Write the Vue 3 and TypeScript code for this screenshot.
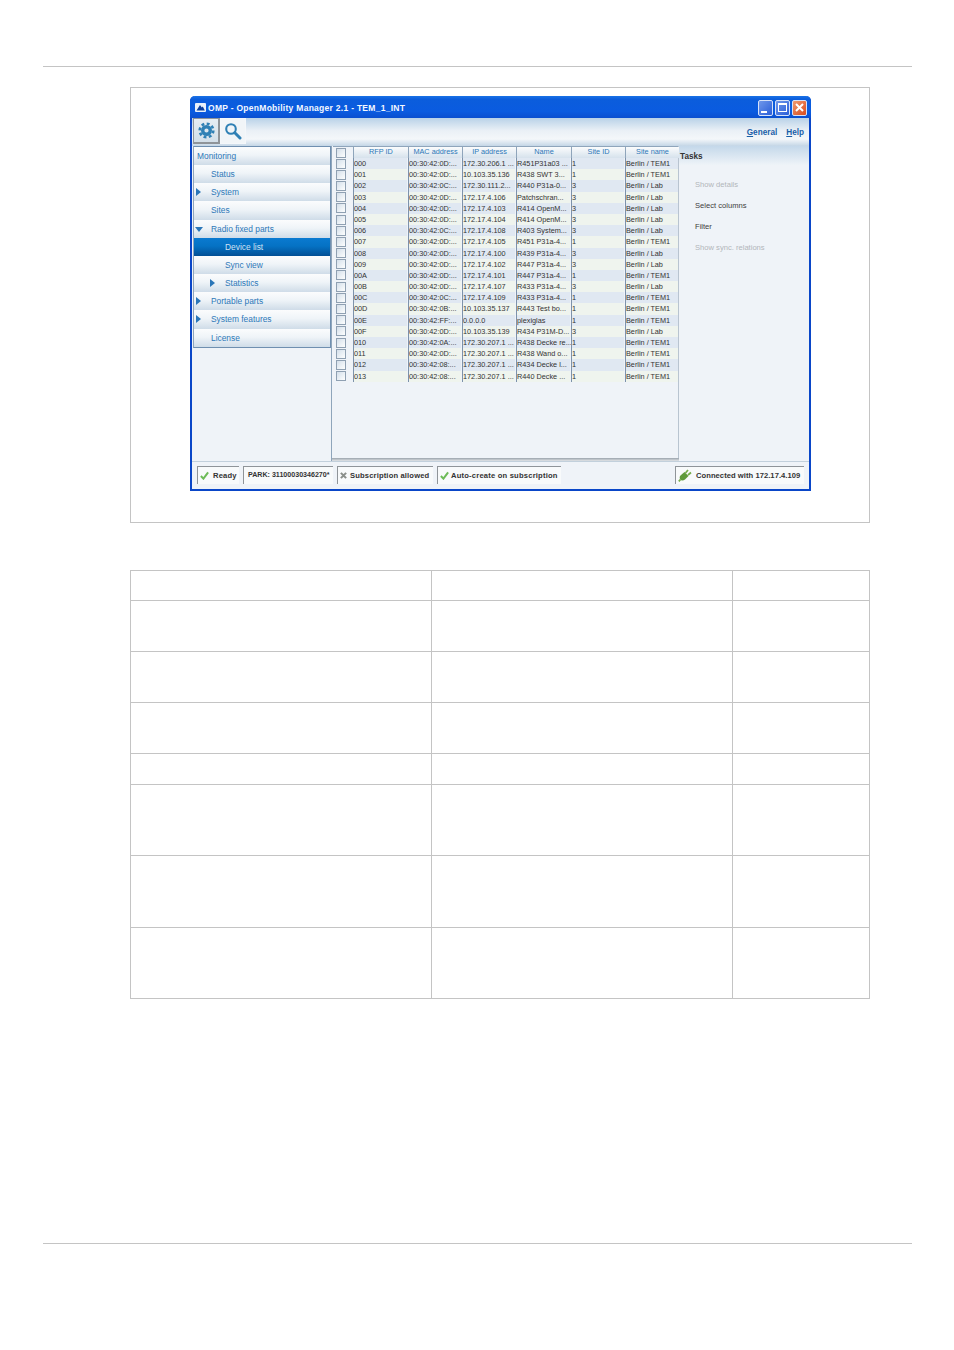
<template>
  <div class="page">
    <div class="rule top-rule"></div>

    <div class="figure">
      <div class="window">
        <div class="titlebar">
          <svg class="app-logo" width="11" height="9" viewBox="0 0 11 9">
            <rect width="11" height="9" rx="1" fill="#e9f1fb" />
            <path d="M1.5 7.5 L5 2 L6.8 4.4 L7.8 3.4 L9.8 7.5 Z" fill="#0b3f9e" />
          </svg>
          <span class="title-text">OMP - OpenMobility Manager 2.1 - TEM_1_INT</span>
          <div class="win-buttons">
            <div class="win-btn blue">
              <span class="min-glyph"></span>
            </div>
            <div class="win-btn blue">
              <span class="max-glyph"></span>
            </div>
            <div class="win-btn red">
              <svg width="11" height="11" viewBox="0 0 11 11">
                <path d="M2 2 L9 9 M9 2 L2 9" stroke="#fff" stroke-width="2" />
              </svg>
            </div>
          </div>
        </div>

        <div class="toolbar">
          <div class="tool-btn pressed">
            <svg width="17" height="17" viewBox="0 0 17 17">
              <circle cx="8.5" cy="8.5" r="6.8" fill="none" stroke="#2f80b5" stroke-width="2.6" stroke-dasharray="2.9 2.44" />
              <circle cx="8.5" cy="8.5" r="3.8" fill="none" stroke="#2f80b5" stroke-width="3.4" />
            </svg>
          </div>
          <div class="tool-btn">
            <svg width="18" height="18" viewBox="0 0 18 18">
              <circle cx="7" cy="7" r="4.8" fill="none" stroke="#2f80b5" stroke-width="2.1" />
              <path d="M10.8 10.8 L16 16" stroke="#2f80b5" stroke-width="3" stroke-linecap="round" />
            </svg>
          </div>
          <div class="tool-links">
            <span class="tool-link"><u>G</u>eneral</span>
            <span class="tool-link"><u>H</u>elp</span>
          </div>
        </div>

        <div class="main">
          <div class="nav-pane">
            <div class="nav-list">
              <div
                v-for="item in navItems"
                :key="item.label"
                class="nav-item"
                :class="{ selected: item.selected }"
                :style="{ paddingLeft: `${item.indent}px` }"
              >
                <span v-if="item.arrow === 'right'" class="arrow-right" :style="{ left: `${item.indent - 15}px` }"></span>
                <span v-if="item.arrow === 'down'" class="arrow-down" :style="{ left: `${item.indent - 16}px` }"></span>
                {{ item.label }}
              </div>
            </div>
          </div>

          <div class="table-pane">
            <div class="grid-row head">
              <div class="check-cell"><span class="check"></span></div>
              <div v-for="h in headers" :key="h" class="head-cell">{{ h }}</div>
            </div>
            <div
              v-for="(r, i) in rows"
              :key="r.id"
              class="grid-row body-row"
              :class="i % 2 === 0 ? 'even' : 'odd'"
            >
              <div class="check-cell"><span class="check"></span></div>
              <div class="cell"><span class="fill">{{ r.id }}</span></div>
              <div class="cell"><span class="fill">{{ r.mac }}</span></div>
              <div class="cell"><span class="fill">{{ r.ip }}</span></div>
              <div class="cell"><span class="fill">{{ r.name }}</span></div>
              <div class="cell"><span class="fill">{{ r.site }}</span></div>
              <div class="cell"><span class="fill">{{ r.siteName }}</span></div>
            </div>
            <div class="table-bottom"></div>
          </div>

          <div class="task-pane">
            <div class="task-head">Tasks</div>
            <div class="task-list">
              <div class="task disabled">Show details</div>
              <div class="task">Select columns</div>
              <div class="task">Filter</div>
              <div class="task disabled">Show sync. relations</div>
            </div>
          </div>
        </div>

        <div class="statusbar">
          <div class="stat s-ready">
            <svg width="9" height="9" viewBox="0 0 10 10"><path d="M1 5.5 L3.8 8.5 L9 1.5" fill="none" stroke="#6dbb58" stroke-width="2.2" /></svg>
            <span>Ready</span>
          </div>
          <div class="stat s-park"><span>PARK: 31100030346270*</span></div>
          <div class="stat s-sub">
            <svg width="7" height="7" viewBox="0 0 8 8"><path d="M1 1 L7 7 M7 1 L1 7" stroke="#8a8f8a" stroke-width="2.4" /></svg>
            <span>Subscription allowed</span>
          </div>
          <div class="stat s-auto">
            <svg width="9" height="9" viewBox="0 0 10 10"><path d="M1 5.5 L3.8 8.5 L9 1.5" fill="none" stroke="#6dbb58" stroke-width="2.2" /></svg>
            <span>Auto-create on subscription</span>
          </div>
          <div class="stat s-conn">
            <svg width="14" height="13" viewBox="0 0 14 13">
              <path d="M2.5 6.5 L6.5 3 L10.5 7 L7 10.5 C5 12 3 11.5 2.2 10.5 C1.5 9 1.5 7.5 2.5 6.5 Z" fill="#5f9a3a" />
              <path d="M7.5 4 L10 1 M10 6 L13 3.5 M2.5 10.5 L0.8 12.4" stroke="#76ac4a" stroke-width="1.8" />
            </svg>
            <span>Connected with 172.17.4.109</span>
          </div>
        </div>
      </div>
    </div>

    <div class="empty-table">
      <div v-for="(h, i) in tableRows" :key="i" class="empty-row" :style="{ height: `${h}px` }">
        <div class="empty-cell c1"></div>
        <div class="empty-cell c2"></div>
        <div class="empty-cell c3"></div>
      </div>
    </div>

    <div class="rule bottom-rule"></div>
  </div>
</template>

<script setup lang="ts">
type NavItem = { label: string; indent: number; arrow?: 'right' | 'down'; selected?: boolean }
type Row = { id: string; mac: string; ip: string; name: string; site: string; siteName: string }

const navItems: NavItem[] = [
  { label: 'Monitoring', indent: 3 },
  { label: 'Status', indent: 17 },
  { label: 'System', indent: 17, arrow: 'right' },
  { label: 'Sites', indent: 17 },
  { label: 'Radio fixed parts', indent: 17, arrow: 'down' },
  { label: 'Device list', indent: 31, selected: true },
  { label: 'Sync view', indent: 31 },
  { label: 'Statistics', indent: 31, arrow: 'right' },
  { label: 'Portable parts', indent: 17, arrow: 'right' },
  { label: 'System features', indent: 17, arrow: 'right' },
  { label: 'License', indent: 17 },
]

const headers = ['RFP ID', 'MAC address', 'IP address', 'Name', 'Site ID', 'Site name']

const TEM = 'Berlin / TEM1'
const LAB = 'Berlin / Lab'

const rows: Row[] = [
  { id: '000', mac: '00:30:42:0D:...', ip: '172.30.206.1 ...', name: 'R451P31a03 ...', site: '1', siteName: TEM },
  { id: '001', mac: '00:30:42:0D:...', ip: '10.103.35.136', name: 'R438 SWT 3...', site: '1', siteName: TEM },
  { id: '002', mac: '00:30:42:0C:...', ip: '172.30.111.2...', name: 'R440 P31a-0...', site: '3', siteName: LAB },
  { id: '003', mac: '00:30:42:0D:...', ip: '172.17.4.106', name: 'Patchschran...', site: '3', siteName: LAB },
  { id: '004', mac: '00:30:42:0D:...', ip: '172.17.4.103', name: 'R414 OpenM...', site: '3', siteName: LAB },
  { id: '005', mac: '00:30:42:0D:...', ip: '172.17.4.104', name: 'R414 OpenM...', site: '3', siteName: LAB },
  { id: '006', mac: '00:30:42:0C:...', ip: '172.17.4.108', name: 'R403 System...', site: '3', siteName: LAB },
  { id: '007', mac: '00:30:42:0D:...', ip: '172.17.4.105', name: 'R451 P31a-4...', site: '1', siteName: TEM },
  { id: '008', mac: '00:30:42:0D:...', ip: '172.17.4.100', name: 'R439 P31a-4...', site: '3', siteName: LAB },
  { id: '009', mac: '00:30:42:0D:...', ip: '172.17.4.102', name: 'R447 P31a-4...', site: '3', siteName: LAB },
  { id: '00A', mac: '00:30:42:0D:...', ip: '172.17.4.101', name: 'R447 P31a-4...', site: '1', siteName: TEM },
  { id: '00B', mac: '00:30:42:0D:...', ip: '172.17.4.107', name: 'R433 P31a-4...', site: '3', siteName: LAB },
  { id: '00C', mac: '00:30:42:0C:...', ip: '172.17.4.109', name: 'R433 P31a-4...', site: '1', siteName: TEM },
  { id: '00D', mac: '00:30:42:0B:...', ip: '10.103.35.137', name: 'R443 Test bo...', site: '1', siteName: TEM },
  { id: '00E', mac: '00:30:42:FF:...', ip: '0.0.0.0', name: 'plexiglas', site: '1', siteName: TEM },
  { id: '00F', mac: '00:30:42:0D:...', ip: '10.103.35.139', name: 'R434 P31M-D...', site: '3', siteName: LAB },
  { id: '010', mac: '00:30:42:0A:...', ip: '172.30.207.1 ...', name: 'R438 Decke re...', site: '1', siteName: TEM },
  { id: '011', mac: '00:30:42:0D:...', ip: '172.30.207.1 ...', name: 'R438 Wand o...', site: '1', siteName: TEM },
  { id: '012', mac: '00:30:42:08:...', ip: '172.30.207.1 ...', name: 'R434 Decke l...', site: '1', siteName: TEM },
  { id: '013', mac: '00:30:42:08:...', ip: '172.30.207.1 ...', name: 'R440  Decke ...', site: '1', siteName: TEM },
]

const tableRows = [30, 51, 51, 51, 31, 71, 72, 71]
</script>

<style>
html,
body {
  background: #fff;
}
</style>

<style scoped>
.page {
  width: 954px;
  height: 1350px;
  overflow: hidden;
  background: #fff;
  font-family: "Liberation Sans", Arial, sans-serif;
  padding-top: 66px;
  box-sizing: border-box;
}

.rule {
  margin-left: 43px;
  width: 869px;
  height: 1px;
  background: #c4c4c4;
}

.figure {
  margin: 20px 0 0 130px;
  width: 740px;
  height: 436px;
  border: 1px solid #c4c4c4;
  box-sizing: border-box;
  padding: 8px 0 0 59px;
}

.window {
  width: 621px;
  height: 395px;
  box-sizing: border-box;
  border: 2px solid #0a46c8;
  border-top: 0;
  border-radius: 5px 5px 0 0;
  background: #eff3f8;
  display: flex;
  flex-direction: column;
}

.titlebar {
  height: 22px;
  flex: none;
  margin: 0 -2px;
  padding: 1px 4px 0 5px;
  box-sizing: border-box;
  border-radius: 5px 5px 0 0;
  background: linear-gradient(#1a72e6 0, #0b5ddc 15%, #0a5be0 70%, #0a4fd0 100%);
  display: flex;
  align-items: center;
  gap: 2px;
}

.title-text {
  color: #f4f8ff;
  font-size: 8.5px;
  font-weight: 700;
  letter-spacing: 0.28px;
}

.win-buttons {
  margin-left: auto;
  display: flex;
  gap: 2px;
}

.win-btn {
  width: 13px;
  height: 14px;
  border: 1px solid #d6e2f8;
  border-radius: 2px;
  display: flex;
  align-items: center;
  justify-content: center;
}

.win-btn.blue {
  background: linear-gradient(135deg, #6f97ea, #2a5ed8);
}

.win-btn.red {
  background: linear-gradient(135deg, #ef9a70, #d94c1e);
}

.min-glyph {
  width: 6px;
  height: 2px;
  background: #fff;
  margin-top: 8px;
  margin-right: 4px;
}

.max-glyph {
  width: 7px;
  height: 6px;
  border: 1px solid #fff;
  border-top-width: 2px;
}

.toolbar {
  height: 28px;
  flex: none;
  background: linear-gradient(#b9d2e8 0, #eaf0f6 45%, #f4f7fa 75%, #c4d6e6 100%);
  display: flex;
  align-items: flex-start;
  padding: 0 0 0 1px;
  box-sizing: border-box;
}

.tool-btn {
  width: 26px;
  height: 26px;
  box-sizing: border-box;
  display: flex;
  align-items: center;
  justify-content: center;
  border: 1px solid #f4f7fa;
  background: #f1f5f8;
}

.tool-btn.pressed {
  width: 27px;
  border: 1px solid #8f9499;
  border-width: 1px 2px 2px 1px;
  background: linear-gradient(#e6edf3, #d3dfe9);
}

.tool-links {
  margin-left: auto;
  padding: 10px 5px 0 0;
  display: flex;
  gap: 9px;
}

.tool-link {
  color: #1a5fa8;
  font-size: 8.2px;
  font-weight: 700;
}

.main {
  flex: 1;
  min-height: 0;
  display: flex;
}

.nav-pane {
  width: 140px;
  flex: none;
  box-sizing: border-box;
  padding-left: 1px;
  border-right: 1px solid #8fa5bb;
}

.nav-list {
  border: 1px solid #6f8fb0;
  border-left-color: #8fa5bb;
}

.nav-item {
  height: 18.16px;
  line-height: 18px;
  box-sizing: border-box;
  position: relative;
  font-size: 8.4px;
  color: #2d78b8;
  background: linear-gradient(#fbfcfd 0, #eff4f8 45%, #cfdce8 100%);
  white-space: nowrap;
}

.nav-item.selected {
  color: #cfe2f5;
  background: linear-gradient(#0a7ad0 0, #0572c4 45%, #024f95 100%);
}

.arrow-right {
  position: absolute;
  top: 5px;
  width: 0;
  height: 0;
  border-left: 5px solid #2a76b8;
  border-top: 4px solid transparent;
  border-bottom: 4px solid transparent;
}

.arrow-down {
  position: absolute;
  top: 7px;
  width: 0;
  height: 0;
  border-top: 5px solid #2a76b8;
  border-left: 4px solid transparent;
  border-right: 4px solid transparent;
}

.table-pane {
  width: 347px;
  flex: none;
  box-sizing: border-box;
  padding-left: 1px;
  position: relative;
  border-right: 1px solid #b8c4d0;
}

.table-bottom {
  position: absolute;
  left: 0;
  right: -1px;
  bottom: 0;
  height: 3px;
  background: linear-gradient(#9aa3ac, #e2e5e8);
}

.grid-row {
  display: grid;
  grid-template-columns: 20px 55px 54px 54px 55px 54px 54px;
  font-size: 7.3px;
}

.head {
  height: 12px;
  border-top: 1px solid #8fa5bb;
  box-sizing: border-box;
}

.head-cell {
  text-align: center;
  color: #2d78b8;
  line-height: 10px;
  background: linear-gradient(#fbfcfd, #d6e2ec);
  border-left: 1px solid #8fa5bb;
  white-space: nowrap;
  overflow: hidden;
}

.check-cell {
  display: flex;
  justify-content: center;
  align-items: center;
  padding-right: 4px;
}

.check {
  width: 8px;
  height: 8px;
  border: 1px solid #8fa0b2;
  background: linear-gradient(135deg, #d4dfea, #fdfefe);
  display: block;
}

.body-row {
  height: 11.2px;
}

.cell {
  border-left: 1px solid #7d92aa;
  padding-right: 1px;
  color: #333;
  line-height: 11.2px;
  white-space: nowrap;
  overflow: hidden;
}

.fill {
  display: block;
  height: 100%;
}

.even .fill {
  background: #e0e8f2;
}

.odd .fill {
  background: #eff4ee;
}

.task-pane {
  flex: 1;
  min-width: 0;
}

.task-head {
  height: 19px;
  font-size: 8.2px;
  font-weight: 700;
  color: #333;
  padding: 6px 0 0 1px;
  box-sizing: border-box;
  background: linear-gradient(#c4d8ea 0, #eef3f8 100%);
}

.task-list {
  padding: 9px 0 0 16px;
  display: flex;
  flex-direction: column;
}

.task {
  height: 21px;
  line-height: 21px;
  font-size: 7.6px;
  color: #3d3d3d;
}

.task.disabled {
  color: #b2b6ba;
}

.statusbar {
  height: 28px;
  flex: none;
  box-sizing: border-box;
  border-top: 1px solid #c2d0dc;
  display: flex;
  align-items: center;
  padding: 0 5px 2px 5px;
  gap: 4px;
}

.stat {
  height: 18px;
  box-sizing: border-box;
  background: #f8fafb;
  border-left: 1px solid #8f9499;
  border-top: 1px solid #8f9499;
  display: flex;
  align-items: center;
  gap: 3px;
  padding-left: 2px;
  font-size: 7.6px;
  font-weight: 700;
  color: #333;
  letter-spacing: 0.15px;
  white-space: nowrap;
}

.s-ready {
  width: 42px;
  gap: 4px;
}

.s-park {
  width: 90px;
  padding-left: 4px;
  font-size: 7.1px;
  letter-spacing: 0;
}

.s-sub {
  width: 96px;
}

.s-auto {
  width: 124px;
  gap: 2px;
  letter-spacing: 0.2px;
}

.s-conn {
  margin-left: auto;
  width: 129px;
  gap: 4px;
  letter-spacing: 0.05px;
}

.empty-table {
  margin: 47px 0 0 130px;
  width: 740px;
  border-top: 1px solid #c4c4c4;
  box-sizing: border-box;
}

.empty-row {
  display: grid;
  grid-template-columns: 301px 301px 138px;
  border-bottom: 1px solid #c4c4c4;
  box-sizing: border-box;
}

.empty-cell {
  border-left: 1px solid #c4c4c4;
}

.c3 {
  border-right: 1px solid #c4c4c4;
}

.bottom-rule {
  margin-top: 244px;
}
</style>
